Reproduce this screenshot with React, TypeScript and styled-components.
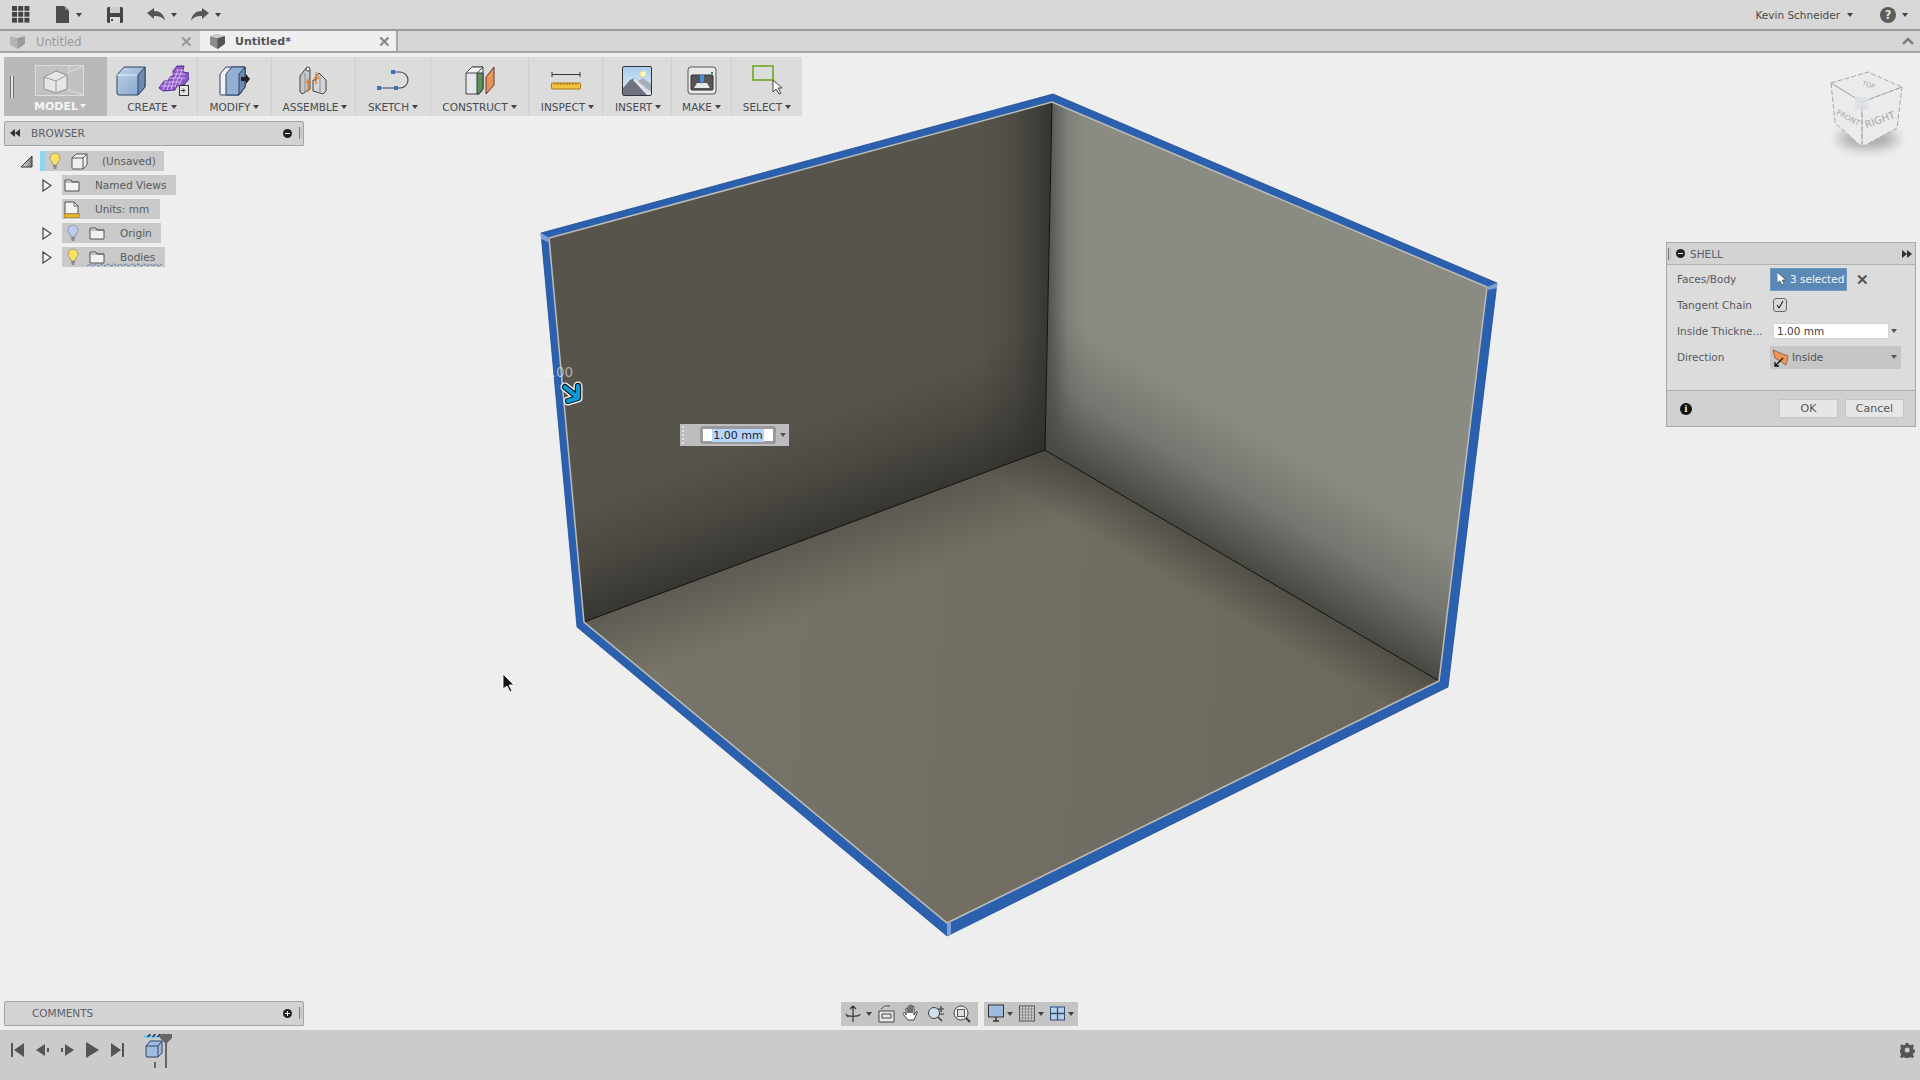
import React from "react";
import styled, { createGlobalStyle } from "styled-components";

const Global = createGlobalStyle`
  html, body { margin: 0; padding: 0; width: 1920px; height: 1080px; overflow: hidden; background: #eeeeee; }
  body { font-family: "DejaVu Sans", "Liberation Sans", sans-serif; font-size: 11px; color: #555; }
  * { box-sizing: border-box; }
`;

const Page = styled.div`
  width: 1920px; height: 1080px; display: flex; flex-direction: column; background: #eeeeee;
`;
const TopBar = styled.header`
  height: 31px; flex: none; display: flex; align-items: center; background: #d8d8d8;
  border-bottom: 2px solid #9b9b9b; padding: 0 12px 0 12px;
`;
const TopIcon = styled.span<{ $gap?: number }>`
  display: inline-flex; align-items: center; gap: 6px; margin-left: ${p => p.$gap ?? 0}px;
`;
const Caret = styled.span<{ $color?: string }>`
  display: inline-block; width: 0; height: 0; border-left: 3.5px solid transparent; border-right: 3.5px solid transparent;
  border-top: 4px solid ${p => p.$color ?? "#444"};
`;
const Spacer = styled.div`flex: 1;`;
const UserName = styled.span`
  display: inline-flex; align-items: center; gap: 7px; font-size: 10.5px; color: #4a4a4a; margin-right: 27px; padding-top: 1px;
`;
const TabBar = styled.nav`
  height: 22px; flex: none; display: flex; background: #d6d6d6; border-bottom: 2px solid #a2a2a2; position: relative;
`;
const Tab = styled.div<{ $active?: boolean }>`
  width: 198px; height: 20px; margin-right: ${p => (p.$active ? 0 : 2)}px; display: flex; align-items: center;
  padding: 1px 5px 0 9px; gap: ${p => (p.$active ? 9 : 10)}px; background: ${p => (p.$active ? "#efefef" : "#d6d6d6")};
  border-right: ${p => (p.$active ? "2px solid #a8a8a8" : "none")};
  color: ${p => (p.$active ? "#555" : "#9a9a9a")}; font-size: ${p => (p.$active ? 11 : 11.5)}px; font-weight: ${p => (p.$active ? 700 : 400)};
`;
const TabTitle = styled.span`flex: 1;`;
const TabClose = styled.span<{ $active?: boolean }>`
  font-size: 15px; font-weight: 700; color: ${p => (p.$active ? "#888" : "#999")}; line-height: 1; font-family: "Liberation Sans", sans-serif;
`;
const ChevronSlot = styled.div`
  position: absolute; right: 6px; top: 2px; height: 16px; display: flex; align-items: center;
`;
const Viewport = styled.main`
  flex: 1; position: relative; background: #eeeeee; overflow: hidden;
`;
const ModelCanvas = styled.svg`
  position: absolute; left: 0; top: 0; width: 1920px; height: 977px;
`;
const Hud = styled.div`
  position: relative; height: 100%; display: flex; flex-direction: column; padding: 4px; width: 820px;
  pointer-events: none;
`;
const Toolbar = styled.div`
  height: 59px; width: 798px; flex: none; display: flex; background: #dcdcdc;
`;
const ModelTool = styled.div`
  width: 103px; flex: none; background: #b9b9b9; position: relative; display: flex; flex-direction: column; align-items: center; padding-left: 9px;
`;
const Grip = styled.span`
  position: absolute; left: 6px; top: 19px; width: 4px; height: 22px; border-left: 1px solid #6c6c6c; border-right: 1px solid #6c6c6c; background: #e6e6e6;
`;
const ModelLabel = styled.div`
  display: flex; align-items: center; gap: 2px; font-weight: 700; color: #f6f6f6; height: 16px; margin-top: -1px; font-size: 11px; flex: none;
`;
const ToolGroup = styled.div<{ $w: number; $last?: boolean }>`
  width: ${p => p.$w}px; flex: none; display: flex; flex-direction: column; align-items: center;
  border-right: ${p => (p.$last ? "none" : "1px solid #cfcfcf")};
`;
const ToolIcons = styled.div`
  height: 37px; flex: none; margin-top: 5px; display: flex; align-items: center; gap: 12px;
`;
const ToolLabel = styled.div<{ $shift?: number }>`
  display: flex; align-items: center; gap: 3px; height: 15px; font-size: 10.5px; color: #474b52; white-space: nowrap; flex: none;
  padding-left: ${p => p.$shift ?? 0}px;
`;
const PanelHeader = styled.div<{ $mt?: number }>`
  width: 300px; height: 25px; flex: none; margin-top: ${p => p.$mt ?? 0}px; display: flex; align-items: center;
  background: #d3d3d3; border: 1px solid #a3a3a3; border-radius: 2px 2px 0 0; padding: 0 1px 1px 5px; color: #5a5f68; font-size: 10.5px;
`;
const PanelTitle = styled.span<{ $pad: number }>`
  flex: 1; padding-left: ${p => p.$pad}px;
`;
const MiniGrip = styled.span`
  width: 3px; height: 12px; border-left: 1px solid #777; border-right: 1px solid #bbb; margin-left: 7px;
`;
const DialogGrip = styled(MiniGrip)`
  margin-left: 0;
`;
const RoundBtn = styled.span`
  width: 9px; height: 9px; border-radius: 50%; background: #222; position: relative; flex: none;
`;
const RoundGlyph = styled.span<{ $plus?: boolean }>`
  position: absolute; left: 2px; top: 4px; width: 5px; height: 1px; background: #eee;
  &::after { content: ""; display: ${p => (p.$plus ? "block" : "none")}; position: absolute; left: 2px; top: -2px; width: 1px; height: 5px; background: #eee; }
`;
const Tree = styled.div`
  flex: 1; padding-top: 3px; display: flex; flex-direction: column;
`;
const TreeRow = styled.div<{ $indent: number }>`
  height: 24px; flex: none; display: flex; align-items: center; padding-left: ${p => p.$indent}px;
`;
const Expander = styled.span<{ $w: number }>`
  width: ${p => p.$w}px; flex: none; display: flex; align-items: center;
`;
const TreePill = styled.div<{ $w: number; $active?: boolean; $pad?: number }>`
  width: ${p => p.$w}px; height: 20px; display: flex; align-items: center; background: #c9c9c9; position: relative;
  border-left: ${p => (p.$active ? "5px solid #90d2f3" : "none")}; padding-left: ${p => p.$pad ?? 3}px;
`;
const TreeIcon = styled.span<{ $mr: number }>`
  display: inline-flex; margin-right: ${p => p.$mr}px; flex: none;
`;
const TreeText = styled.span`
  font-size: 10.5px; color: #555a62; white-space: nowrap;
`;
const Wavy = styled.svg`
  position: absolute; left: 25px; bottom: 0;
`;
const Dialog = styled.section`
  position: absolute; left: 1666px; top: 189px; width: 250px; height: 185px; background: #dcdcdc;
  border: 1px solid #a8a8a8; display: flex; flex-direction: column; color: #555;
`;
const DialogHead = styled.div`
  height: 22px; flex: none; display: flex; align-items: center; background: #d3d3d3; border-bottom: 1px solid #b0b0b0;
  padding: 0 3px 0 1px; gap: 5px; color: #5a5f68; font-size: 10.5px;
`;
const DialogBody = styled.div`
  flex: 1; padding-top: 1px; display: flex; flex-direction: column;
`;
const DialogRow = styled.div`
  height: 26px; display: flex; align-items: center; padding-left: 10px; font-size: 10.5px;
`;
const DialogLabel = styled.span`
  width: 93px; flex: none; color: #555a62; white-space: nowrap;
`;
const SelectedBtn = styled.span`
  width: 77px; height: 23px; display: flex; align-items: center; padding-left: 6px; gap: 4px; background: #5a89b5;
  border: 1px solid #6e9ac2; color: #f4f6f8; font-size: 10.5px; white-space: nowrap;
`;
const ClearX = styled.span`
  margin-left: 9px; font: 700 15px "Liberation Sans", sans-serif; color: #555; line-height: 1;
`;
const CheckBox = styled.span`
  width: 14px; height: 14px; margin-left: 3px; background: #d8d8d8; border: 1px solid #666; border-radius: 3px; display: flex; align-items: center; justify-content: center;
`;
const TextField = styled.span`
  width: 116px; height: 16px; margin-left: 3px; background: #fff; border: 1px solid #d4d4d4; display: flex; align-items: center; padding-left: 3px; color: #444;
`;
const CaretSlot = styled.span`
  width: 10px; display: flex; justify-content: center;
`;
const SelectBox = styled.span`
  width: 131px; height: 23px; background: #c6c6c6; display: flex; align-items: center; padding: 0 4px 0 2px; gap: 3px; color: #555;
`;
const DialogFoot = styled.div`
  height: 36px; flex: none; background: #d0d0d0; border-top: 1px solid #b0b0b0; display: flex; align-items: center; padding: 0 0 0 13px;
`;
const InfoDot = styled.span`
  width: 12px; height: 12px; flex: none; border-radius: 50%; background: #111; color: #fff; font: 700 10px "Liberation Serif", serif; display: flex; align-items: center; justify-content: center; margin-right: 87px;
`;
const DlgButton = styled.span`
  width: 59px; height: 19px; flex: none; margin-right: 7px; background: #e6e6e6; border: 1px solid #c4c4c4; display: flex; align-items: center; justify-content: center; font-size: 11px; color: #555;
`;
const DimInput = styled.div`
  position: absolute; left: 680px; top: 371px; width: 109px; height: 22px; background: #bdbdbd; display: flex; align-items: center; padding-left: 2px;
`;
const DimGrip = styled.span`
  width: 3px; height: 18px; margin-right: 15px; border-left: 2px dotted #dedede;
`;
const DimField = styled.span`
  width: 76px; height: 18px; background: #fff; border: 3px solid #9a9a9a; border-radius: 3px; display: flex; align-items: center; justify-content: center; font-size: 11px; color: #222;
`;
const DimSel = styled.span`
  background: #b4d5fe; padding: 0 1px;
`;
const DimCaret = styled.span`
  margin-left: 4px; display: flex;
`;
const DimValue = styled.span`
  position: absolute; left: 543px; top: 311px; font-size: 13.5px; color: rgba(255,255,255,.55);
`;
const Pin = styled.svg<{ $x: number; $y: number }>`
  position: absolute; left: ${p => p.$x}px; top: ${p => p.$y}px;
`;
const NavBar = styled.div`
  position: absolute; left: 841px; bottom: 4px; display: flex; gap: 6px; height: 24px;
`;
const NavGroup = styled.div<{ $w: number; $pad: number }>`
  width: ${p => p.$w}px; height: 24px; background: #c4c4c4; display: flex; align-items: center; padding-left: ${p => p.$pad}px; gap: 6px;
`;
const NavItem = styled.span`
  display: inline-flex; align-items: center; gap: 3px;
`;
const Timeline = styled.footer`
  height: 50px; flex: none; background: #cbcbcb; display: flex; align-items: center; padding: 0 5px 10px 11px;
`;
const TimeBtns = styled.div`
  display: flex; align-items: center; gap: 12px; width: 133px;
`;

const TabCube = ({ faded }: { faded?: boolean }) => (
  <svg width="17" height="17" viewBox="0 0 16 16" opacity={faded ? 0.45 : 1}>
    <path d="M1 3l7-2 7 2v7l-7 5-7-4z" fill="#8a8a8a" />
    <path d="M1 3l7-2 7 2-7 2z" fill="#cfcfcf" />
    <path d="M8 5l7-2v7l-7 5z" fill="#555" />
  </svg>
);

const BlueCube = ({ s = 30 }: { s?: number }) => (
  <svg width={s} height={s} viewBox="0 0 30 30">
    <defs><linearGradient id="bc" x1="0" y1="0" x2="1" y2="1"><stop offset="0" stopColor="#c2d6ec" /><stop offset="1" stopColor="#7f9fc8" /></linearGradient></defs>
    <path d="M1 9L8 1h21v20l-7 8H3a2 2 0 01-2-2z" fill="url(#bc)" stroke="#2f4463" strokeWidth="1" strokeLinejoin="round" />
    <path d="M1 9h21l7-8" fill="none" stroke="#e8f0f8" strokeWidth="1" />
    <path d="M22 9v20l7-8V1z" fill="#6f8bb2" stroke="#2f4463" />
  </svg>
);
const PurpleForm = () => (
  <svg width="31" height="31" viewBox="0 0 31 31">
    <path d="M1 23l5-7h4l2-4 3-1V6l4-5h7l-1 6 6 1 0 6-5 6-7 1-2 4-12 1z" fill="#8d57c6" stroke="#5a2d96" strokeLinejoin="round" />
    <path d="M3 21h13M6 17h16M10 13h17M14 9h13M18 5h8M8 17l-3 8M12 17l-3 8M16 13l-3 12M20 13l-3 9M24 5l-3 8M20 5l-3 8M24 13l-3 8" stroke="#d9c6f0" strokeWidth=".9" fill="none" />
    <rect x="21.500" y="20.500" width="9" height="10" fill="#e8e8e8" stroke="#333" />
    <path d="M23 25.500h3M25 23.500l2 2-2 2" stroke="#222" fill="none" />
  </svg>
);
const ModifyIcon = () => (
  <svg width="31" height="30" viewBox="0 0 31 30">
    <path d="M1 8l6-7h19v20l-6 8H2a1 1 0 01-1-1z" fill="#f2f2f2" stroke="#2f4463" />
    <path d="M7 8l6-7h13v20l-6 8H7z" fill="#93afd3" stroke="#2f4463" />
    <path d="M20 8v21l6-8V1z" fill="#6f8bb2" stroke="#2f4463" />
    <path d="M22 11h5V8l4 5-4 5v-3h-5z" fill="#222" />
  </svg>
);
const AssembleIcon = () => (
  <svg width="29" height="29" viewBox="0 0 29 29">
    <path d="M1 10l7-9 3 3v19l-8 5-2-2z" fill="#c4c9d0" stroke="#444" />
    <path d="M27 14l-7-7-3 4v3l-3 0v11l10 3 3-3z" fill="#d2d6db" stroke="#444" />
    <path d="M6 7v19M21 9v17" stroke="#8b8f96" />
    <circle cx="9" cy="3" r="2" fill="#fff" stroke="#444" />
    <path d="M9 13v13M17 6v12M7 16h5M15 12h5" stroke="#e6761e" strokeWidth="1.300" />
  </svg>
);
const SketchIcon = () => (
  <svg width="32" height="24" viewBox="0 0 32 24">
    <path d="M3 19h20a8 8 0 000-16h-6" fill="none" stroke="#444" strokeWidth="1.100" />
    <rect x="0" y="17" width="4" height="4" fill="#3c6fc4" /><rect x="14" y="1" width="4" height="4" fill="#3c6fc4" /><rect x="17" y="17" width="4" height="4" fill="#3c6fc4" />
  </svg>
);
const ConstructIcon = () => (
  <svg width="30" height="29" viewBox="0 0 30 29">
    <path d="M1 7l6-6h11v22l-4 5H1z" fill="#e4e6e8" stroke="#444" />
    <path d="M12 7h6v16l-4 5h-2z" fill="#5d9350" stroke="#335" />
    <path d="M1 7h11l6-6H7z" fill="#f4f4f4" stroke="#444" />
    <path d="M21 28V11l8-10v18z" fill="#e8935a" stroke="#5a3a24" />
  </svg>
);
const RulerIcon = () => (
  <svg width="30" height="18" viewBox="0 0 30 18">
    <path d="M1 0v5M29 0v5M1 2.500h28" stroke="#333" fill="none" />
    <rect x="0.500" y="11" width="29" height="6" rx="1" fill="#f2c33e" stroke="#a9781c" />
    <path d="M4 11v2M7 11v2M10 11v2M13 11v2M16 11v2M19 11v2M22 11v2M25 11v2" stroke="#9a6a12" />
  </svg>
);
const InsertIcon = () => (
  <svg width="30" height="30" viewBox="0 0 30 30">
    <defs><linearGradient id="sky" x1="0" y1="0" x2="0" y2="1"><stop offset="0" stopColor="#a6cdee" /><stop offset="1" stopColor="#e3eef7" /></linearGradient></defs>
    <rect x="0.500" y="0.500" width="29" height="29" rx="1.500" fill="url(#sky)" stroke="#333" />
    <circle cx="21" cy="8" r="3" fill="#fff6c8" stroke="#f5d98a" />
    <path d="M1 22l7-8 5-2 16 17H1z" fill="#6f7380" />
    <path d="M16 15l5-3 8 6v8z" fill="#a5adb8" />
    <path d="M13 12l16 17h-4L11 14z" fill="#e4e7ea" />
  </svg>
);
const MakeIcon = () => (
  <svg width="30" height="29" viewBox="0 0 30 29">
    <path d="M1 4a3 3 0 013-3h22a3 3 0 013 3v21a3 3 0 01-3 3H4a3 3 0 01-3-3z" fill="#e9e9e9" stroke="#555" />
    <rect x="4" y="9" width="22" height="15" rx="1" fill="#555" stroke="#333" />
    <path d="M7 22l3-5h10l3 5z" fill="#e8e8e8" />
    <path d="M13 9h4v6l-2 3-2-3z" fill="#4d8cd6" />
    <rect x="24" y="6" width="2" height="2" fill="#2b8a3e" />
  </svg>
);
const SelectIcon = () => (
  <svg width="31" height="31" viewBox="0 0 31 31">
    <rect x="1" y="1" width="20" height="14" fill="none" stroke="#6aaa1e" strokeWidth="1.600" />
    <path d="M21 15v12l3-3 3 5 2-1-3-5h4z" fill="#fff" stroke="#444" strokeWidth="1" />
  </svg>
);
const ModelIcon = () => (
  <svg width="50" height="31" viewBox="0 0 50 31">
    <rect x="0.500" y="0.500" width="48" height="30" fill="#c2c2c2" stroke="#dcdcdc" />
    <path d="M32 8L48 1M32 24l16 6M34 1v7" stroke="#dedede" fill="none" />
    <path d="M9 12l12-6 11 4v14l-11 4-12-4z" fill="#e6e6e6" stroke="#8f8f8f" />
    <path d="M9 12l12 4 11-6M21 16v12" stroke="#9a9a9a" fill="none" />
  </svg>
);

const Bulb = ({ color }: { color: string }) => (
  <svg width="12" height="18" viewBox="0 0 12 18">
    <path d="M6 1a5 5 0 00-3 9l1 3h4l1-3a5 5 0 00-3-9z" fill={color} stroke="#8f8f8f" strokeWidth=".8" />
    <path d="M4 14h4M4.500 16h3" stroke="#777" strokeWidth="1.400" />
  </svg>
);
const Folder = () => (
  <svg width="16" height="13" viewBox="0 0 16 13">
    <path d="M1 12V1h6l1 2h7v9z" fill="#f2f2f2" stroke="#444" strokeWidth=".9" />
    <path d="M1 3h14" stroke="#444" strokeWidth=".6" />
  </svg>
);
const TreeTriangle = ({ open }: { open?: boolean }) =>
  open ? (
    <svg width="13" height="13" viewBox="0 0 13 13"><defs><linearGradient id="tt" x1="0" y1="0" x2="1" y2="0"><stop offset="0" stopColor="#eee" /><stop offset="1" stopColor="#777" /></linearGradient></defs><path d="M1 12L12 1v11z" fill="url(#tt)" stroke="#333" /></svg>
  ) : (
    <svg width="10" height="13" viewBox="0 0 10 13"><path d="M1 1l8 5.500L1 12z" fill="#f4f4f4" stroke="#444" strokeWidth="1.200" /></svg>
  );
const SmallCube = () => (
  <svg width="17" height="17" viewBox="0 0 17 17">
    <path d="M1 5l4-4h11v11l-4 4H2a1 1 0 01-1-1z" fill="#efefef" stroke="#555" strokeLinejoin="round" />
    <path d="M1 5h11l4-4M12 5v11" fill="none" stroke="#555" />
  </svg>
);
const UnitsDoc = () => (
  <svg width="16" height="17" viewBox="0 0 16 17">
    <path d="M1 13V1h9l4 4v8z" fill="#f3f3f3" stroke="#444" strokeWidth=".9" />
    <path d="M10 1v4h4" fill="none" stroke="#444" strokeWidth=".8" />
    <rect x="0.500" y="13" width="15" height="3.500" fill="#f0b92c" stroke="#a87a12" strokeWidth=".7" />
  </svg>
);

const ViewCube = () => (
  <Pin $x={1820} $y={12} width="96" height="106" viewBox="0 0 96 106">
    <defs><filter id="soft" x="-40%" y="-80%" width="180%" height="260%"><feGaussianBlur stdDeviation="6" /></filter></defs>
    <ellipse cx="48" cy="74" rx="30" ry="10" fill="#000" opacity=".28" filter="url(#soft)" />
    <path d="M11 18L48 7l34 15-5 41-35 19-27-24z" fill="#ebebeb" />
    <path d="M11 18L48 7l34 15-40 15zM11 18l4 40 27 24V37zM42 37l40-15-5 41-35 19z" fill="none" stroke="#a8a8a8" strokeDasharray="5 2" />
    <rect x="35" y="32" width="13" height="13" fill="#dde2e8" opacity=".85" />
    <text x="48" y="22" fontSize="6.500" fill="#aaa" fontFamily="DejaVu Sans" textAnchor="middle" transform="rotate(18 48 22)">TOP</text>
    <text x="27" y="55" fontSize="7.500" fill="#aaa" fontFamily="DejaVu Sans" textAnchor="middle" transform="rotate(28 27 55)">FRONT</text>
    <text x="61" y="58" fontSize="10" fill="#a4a4aa" fontFamily="DejaVu Sans" textAnchor="middle" transform="rotate(-20 61 58)">RIGHT</text>
  </Pin>
);

const Model = () => (
  <ModelCanvas viewBox="0 53 1920 977">
    <defs>
      <linearGradient id="wallL" gradientUnits="userSpaceOnUse" x1="815" y1="536" x2="775" y2="430"><stop offset="0" stopColor="#35342f" stopOpacity=".95" /><stop offset=".5" stopColor="#35342f" stopOpacity=".35" /><stop offset="1" stopColor="#35342f" stopOpacity="0" /></linearGradient>
      <linearGradient id="wallLE" gradientUnits="userSpaceOnUse" x1="1050" y1="270" x2="980" y2="270"><stop offset="0" stopColor="#2f2e2b" stopOpacity=".8" /><stop offset=".5" stopColor="#2f2e2b" stopOpacity=".25" /><stop offset="1" stopColor="#2f2e2b" stopOpacity="0" /></linearGradient>
      <linearGradient id="wallR" gradientUnits="userSpaceOnUse" x1="1242" y1="565" x2="1305" y2="457"><stop offset="0" stopColor="#44453f" stopOpacity=".95" /><stop offset=".5" stopColor="#44453f" stopOpacity=".3" /><stop offset="1" stopColor="#44453f" stopOpacity="0" /></linearGradient>
      <linearGradient id="wallRE" gradientUnits="userSpaceOnUse" x1="1050" y1="270" x2="1085" y2="270"><stop offset="0" stopColor="#4a4b46" stopOpacity=".8" /><stop offset=".5" stopColor="#4a4b46" stopOpacity=".18" /><stop offset="1" stopColor="#4a4b46" stopOpacity="0" /></linearGradient>
      <linearGradient id="floorB" gradientUnits="userSpaceOnUse" x1="584" y1="622" x2="1439" y2="681"><stop offset="0" stopColor="#79756a" /><stop offset="1" stopColor="#6b675c" /></linearGradient>
      <linearGradient id="floorL" gradientUnits="userSpaceOnUse" x1="815" y1="536" x2="840" y2="603"><stop offset="0" stopColor="#45433c" stopOpacity=".5" /><stop offset="1" stopColor="#45433c" stopOpacity="0" /></linearGradient>
      <linearGradient id="floorR" gradientUnits="userSpaceOnUse" x1="1242" y1="565" x2="1217" y2="608"><stop offset="0" stopColor="#45433c" stopOpacity=".7" /><stop offset="1" stopColor="#45433c" stopOpacity="0" /></linearGradient>
    </defs>
    <path d="M541 233L1053 94 1497 283 1448 687 947 936 577 627z" fill="#2b60ae" stroke="#1d4c94" strokeWidth=".8" />
    <path d="M549 238L1052 102 1487 287 1439 681 947 923 584 622z" fill="#55524a" />
    <path d="M549 238L1052 102 1045 450 584 622z" fill="#57544c" />
    <path d="M549 238L1052 102 1045 450 584 622z" fill="url(#wallL)" />
    <path d="M549 238L1052 102 1045 450 584 622z" fill="url(#wallLE)" />
    <path d="M1052 102L1487 287 1439 681 1045 450z" fill="#8a8b83" />
    <path d="M1052 102L1487 287 1439 681 1045 450z" fill="url(#wallR)" />
    <path d="M1052 102L1487 287 1439 681 1045 450z" fill="url(#wallRE)" />
    <path d="M584 622L1045 450 1439 681 947 923z" fill="url(#floorB)" />
    <path d="M584 622L1045 450 1439 681 947 923z" fill="url(#floorL)" />
    <path d="M584 622L1045 450 1439 681 947 923z" fill="url(#floorR)" />
    <path d="M584 622L1045 450 1439 681M1052 102L1045 450" fill="none" stroke="#111" strokeWidth="1" />
    <path d="M549 238L1052 102 1487 287 1439 681 947 923 584 622z" fill="none" stroke="#bdbcb6" strokeWidth="1.500" />
    <path d="M541 233l8 5-1 4-7-3zM1497 283l-10 4 1 3 9-2zM947 923v13l4-2v-11z" fill="#7ea0d4" />
  </ModelCanvas>
);

const NavIcon = ({ children, w = 24 }: { children: React.ReactNode; w?: number }) => (
  <svg width={w} height="20" viewBox={`0 0 ${w} 20`}>{children}</svg>
);

export default function App() {
  return (
    <Page>
      <Global />
      <TopBar>
        <svg width="18" height="17" viewBox="0 0 18 17" fill="#444">
          {[0, 1, 2].flatMap(c => [0, 1, 2].map(r => <rect key={`${c}${r}`} x={c * 6.2} y={r * 5.9} width="5" height="4.800" />))}
        </svg>
        <TopIcon $gap={26}>
          <svg width="14" height="17" viewBox="0 0 14 17"><path d="M0 0h8l5 5v12H0z" fill="#4c4c4c" /><path d="M9 0l4 4H9z" fill="#8a8a8a" /></svg>
          <Caret />
        </TopIcon>
        <TopIcon $gap={25}>
          <svg width="16" height="16" viewBox="0 0 16 16"><path d="M0 1.500A1.500 1.500 0 011.500 0h13A1.500 1.500 0 0116 1.500v13a1.500 1.500 0 01-1.500 1.500h-13A1.500 1.500 0 010 14.500z" fill="#444" /><rect x="3" y="0" width="10" height="6" fill="#ccc" /><rect x="3" y="10" width="10" height="6" fill="#ddd" /><rect x="4" y="12" width="2" height="2" fill="#444" /></svg>
        </TopIcon>
        <TopIcon $gap={24}>
          <svg width="18" height="13" viewBox="0 0 18 13"><path d="M0 5l7-5v3c6 0 10 3 11 10-2-4-6-5-11-5v3z" fill="#555" /></svg>
          <Caret />
        </TopIcon>
        <TopIcon $gap={14}>
          <svg width="18" height="13" viewBox="0 0 18 13"><path d="M18 5l-7-5v3C5 3 1 6 0 13c2-4 6-5 11-5v3z" fill="#555" /></svg>
          <Caret />
        </TopIcon>
        <Spacer />
        <UserName>Kevin Schneider<Caret /></UserName>
        <TopIcon>
          <svg width="16" height="16" viewBox="0 0 16 16"><circle cx="8" cy="8" r="8" fill="#5c5c5c" /><text x="8" y="12" fontSize="11.500" fontWeight="700" fill="#e4e4e4" textAnchor="middle" fontFamily="DejaVu Sans">?</text></svg>
          <Caret />
        </TopIcon>
      </TopBar>
      <TabBar>
        <Tab><TabCube faded /><TabTitle>Untitled</TabTitle><TabClose>✕</TabClose></Tab>
        <Tab $active><TabCube /><TabTitle>Untitled*</TabTitle><TabClose $active>✕</TabClose></Tab>
        <ChevronSlot><svg width="12" height="8" viewBox="0 0 12 8"><path d="M1 7l5-5 5 5" fill="none" stroke="#777" strokeWidth="2.400" /></svg></ChevronSlot>
      </TabBar>
      <Viewport>
        <Model />
        <Hud>
          <Toolbar>
            <ModelTool>
              <Grip />
              <ToolIcons><ModelIcon /></ToolIcons>
              <ModelLabel>MODEL<Caret $color="#f4f4f4" /></ModelLabel>
            </ModelTool>
            <ToolGroup $w={91}><ToolIcons><BlueCube /><PurpleForm /></ToolIcons><ToolLabel>CREATE<Caret /></ToolLabel></ToolGroup>
            <ToolGroup $w={74}><ToolIcons><ModifyIcon /></ToolIcons><ToolLabel>MODIFY<Caret /></ToolLabel></ToolGroup>
            <ToolGroup $w={84}><ToolIcons><AssembleIcon /></ToolIcons><ToolLabel $shift={3}>ASSEMBLE<Caret /></ToolLabel></ToolGroup>
            <ToolGroup $w={75}><ToolIcons><SketchIcon /></ToolIcons><ToolLabel>SKETCH<Caret /></ToolLabel></ToolGroup>
            <ToolGroup $w={98}><ToolIcons><ConstructIcon /></ToolIcons><ToolLabel>CONSTRUCT<Caret /></ToolLabel></ToolGroup>
            <ToolGroup $w={74}><ToolIcons><RulerIcon /></ToolIcons><ToolLabel $shift={4}>INSPECT<Caret /></ToolLabel></ToolGroup>
            <ToolGroup $w={69}><ToolIcons><InsertIcon /></ToolIcons><ToolLabel $shift={2}>INSERT<Caret /></ToolLabel></ToolGroup>
            <ToolGroup $w={60}><ToolIcons><MakeIcon /></ToolIcons><ToolLabel>MAKE<Caret /></ToolLabel></ToolGroup>
            <ToolGroup $w={70} $last><ToolIcons><SelectIcon /></ToolIcons><ToolLabel>SELECT<Caret /></ToolLabel></ToolGroup>
          </Toolbar>
          <PanelHeader $mt={5}>
            <svg width="10" height="8" viewBox="0 0 10 8"><path d="M5 0v8L0 4zM10 0v8L5 4z" fill="#333" /></svg>
            <PanelTitle $pad={11}>BROWSER</PanelTitle>
            <RoundBtn><RoundGlyph /></RoundBtn><MiniGrip />
          </PanelHeader>
          <Tree>
            <TreeRow $indent={16}>
              <Expander $w={20}><TreeTriangle open /></Expander>
              <TreePill $w={124} $active $pad={4}>
                <TreeIcon $mr={10}><Bulb color="#f6e25c" /></TreeIcon>
                <TreeIcon $mr={14}><SmallCube /></TreeIcon>
                <TreeText>(Unsaved)</TreeText>
              </TreePill>
            </TreeRow>
            <TreeRow $indent={38}>
              <Expander $w={20}><TreeTriangle /></Expander>
              <TreePill $w={114} $pad={2}><TreeIcon $mr={15}><Folder /></TreeIcon><TreeText>Named Views</TreeText></TreePill>
            </TreeRow>
            <TreeRow $indent={38}>
              <Expander $w={20} />
              <TreePill $w={98} $pad={2}><TreeIcon $mr={15}><UnitsDoc /></TreeIcon><TreeText>Units: mm</TreeText></TreePill>
            </TreeRow>
            <TreeRow $indent={38}>
              <Expander $w={20}><TreeTriangle /></Expander>
              <TreePill $w={99} $pad={5}>
                <TreeIcon $mr={10}><Bulb color="#b9cff2" /></TreeIcon>
                <TreeIcon $mr={15}><Folder /></TreeIcon><TreeText>Origin</TreeText>
              </TreePill>
            </TreeRow>
            <TreeRow $indent={38}>
              <Expander $w={20}><TreeTriangle /></Expander>
              <TreePill $w={103} $pad={5}>
                <TreeIcon $mr={10}><Bulb color="#f6e25c" /></TreeIcon>
                <TreeIcon $mr={15}><Folder /></TreeIcon><TreeText>Bodies</TreeText>
                <Wavy width="76" height="4" viewBox="0 0 76 4"><path d="M0 3L3 1 6 3 9 1 12 3 15 1 18 3 21 1 24 3 27 1 30 3 33 1 36 3 39 1 42 3 45 1 48 3 51 1 54 3 57 1 60 3 63 1 66 3 69 1 72 3 75 1" fill="none" stroke="#6c84aa" strokeWidth="1.100" strokeDasharray="3 1" /></Wavy>
              </TreePill>
            </TreeRow>
          </Tree>
          <PanelHeader>
            <PanelTitle $pad={22}>COMMENTS</PanelTitle>
            <RoundBtn><RoundGlyph $plus /></RoundBtn><MiniGrip />
          </PanelHeader>
        </Hud>
        <ViewCube />
        <Dialog>
          <DialogHead>
            <DialogGrip />
            <RoundBtn><RoundGlyph /></RoundBtn>
            <Spacer as="span">SHELL</Spacer>
            <svg width="10" height="8" viewBox="0 0 10 8"><path d="M0 0v8l5-4zM5 0v8l5-4z" fill="#333" /></svg>
          </DialogHead>
          <DialogBody>
            <DialogRow><DialogLabel>Faces/Body</DialogLabel>
              <SelectedBtn>
                <svg width="9" height="14" viewBox="0 0 9 14"><path d="M0 0v11l3-2 2 4 2-1-2-4h4z" fill="#fff" stroke="#333" strokeWidth=".6" /></svg>
                3 selected
              </SelectedBtn>
              <ClearX>✕</ClearX>
            </DialogRow>
            <DialogRow><DialogLabel>Tangent Chain</DialogLabel>
              <CheckBox><svg width="10" height="10" viewBox="0 0 10 10"><path d="M2 5l2 3 4-7" fill="none" stroke="#222" strokeWidth="1.100" /></svg></CheckBox>
            </DialogRow>
            <DialogRow><DialogLabel>Inside Thickne...</DialogLabel>
              <TextField>1.00 mm</TextField>
              <CaretSlot><Caret $color="#555" /></CaretSlot>
            </DialogRow>
            <DialogRow><DialogLabel>Direction</DialogLabel>
              <SelectBox>
                <svg width="17" height="19" viewBox="0 0 17 19"><path d="M1 2l7 3 8 3-2 9-6-4-5-3z" fill="#f0945a" stroke="#7a4a24" strokeWidth=".7" /><path d="M11 10L3 18M3 14v4h4" fill="none" stroke="#111" strokeWidth="1.300" /></svg>
                <Spacer as="span">Inside</Spacer>
                <Caret $color="#555" />
              </SelectBox>
            </DialogRow>
          </DialogBody>
          <DialogFoot>
            <InfoDot>i</InfoDot>
            <DlgButton>OK</DlgButton>
            <DlgButton>Cancel</DlgButton>
          </DialogFoot>
        </Dialog>
        <DimValue>1.00</DimValue>
        <Pin $x={556} $y={324} width="30" height="30" viewBox="0 0 30 30">
          <g fill="none" strokeLinecap="round" strokeLinejoin="round" transform="translate(2 2)">
            <path d="M7 8L18 17M20 7V19L10 22" stroke="#fff" strokeWidth="9" />
            <path d="M7 8L18 17M20 7V19L10 22" stroke="#10222c" strokeWidth="6.500" />
            <path d="M7 8L18 17M20 7V19L10 22" stroke="#0c9ad6" strokeWidth="4" />
          </g>
        </Pin>
        <DimInput>
          <DimGrip />
          <DimField><DimSel>1.00 mm</DimSel></DimField>
          <DimCaret><Caret $color="#555" /></DimCaret>
        </DimInput>
        <Pin $x={502} $y={620} width="14" height="20" viewBox="0 0 14 20">
          <path d="M1 1v15l4-3 3 6 2-1-3-6h5z" fill="#111" stroke="#fff" strokeWidth=".9" />
        </Pin>
        <NavBar>
          <NavGroup $w={137} $pad={2}>
            <NavItem>
              <NavIcon w={20}><path d="M10 2v16M10 2L7 5M10 2l3 3M3 10c0 3 14 3 14 0M3 10l2 3" fill="none" stroke="#333" strokeWidth="1.200" /></NavIcon>
              <Caret />
            </NavItem>
            <NavIcon w={17}><path d="M1 7h15v11H1zM3 5l4-3h5M4 10h9v4H4z" fill="#e8e8e8" stroke="#444" /></NavIcon>
            <NavIcon w={20}><path d="M5 11V5a1 1 0 012 0v4-6a1 1 0 012 0v6-7a1 1 0 012 0v7-6a1 1 0 012 0v8l2-3c1-1 2 0 1 1l-3 7H7l-5-6c-1-1 1-2 2-1z" fill="#fff" stroke="#333" strokeWidth=".9" /></NavIcon>
            <NavIcon w={19}><circle cx="7" cy="9" r="5.500" fill="#cfe0ee" stroke="#444" /><path d="M11 13l4 4M14 2v6M11 5h6M12 10h5" stroke="#333" strokeWidth="1.200" fill="none" /></NavIcon>
            <NavIcon w={20}><circle cx="9" cy="9" r="7" fill="#eee" stroke="#444" /><rect x="5.500" y="5.500" width="7" height="7" fill="#ddd" stroke="#555" /><path d="M14 14l4 4" stroke="#333" strokeWidth="1.800" /></NavIcon>
          </NavGroup>
          <NavGroup $w={94} $pad={4}>
            <NavItem>
              <NavIcon w={16}><rect x="0.500" y="1" width="15" height="12" fill="#9ebce0" stroke="#333" /><path d="M5 17h6M8 13v4" stroke="#333" strokeWidth="1.400" /></NavIcon>
              <Caret />
            </NavItem>
            <NavItem>
              <NavIcon w={16}><rect x="0.500" y="2" width="15" height="15" fill="#d0d0d0" stroke="#555" /><path d="M3.500 2v15M6.500 2v15M9.500 2v15M12.500 2v15M0 5h16M0 8h16M0 11h16M0 14h16" stroke="#777" strokeWidth=".7" /></NavIcon>
              <Caret />
            </NavItem>
            <NavItem>
              <NavIcon w={15}><rect x="0.500" y="3" width="14" height="13" fill="#b8cfe8" stroke="#2f4d7a" /><path d="M7.500 3v13M0.500 9.500h14" stroke="#2f4d7a" strokeWidth="1.300" /></NavIcon>
              <Caret />
            </NavItem>
          </NavGroup>
        </NavBar>
      </Viewport>
      <Timeline>
        <TimeBtns>
          <svg width="13" height="14" viewBox="0 0 13 14"><path d="M0 0h2v14H0zM13 0v14L3 7z" fill="#555" /></svg>
          <svg width="13" height="14" viewBox="0 0 13 14"><path d="M9 1v12L0 7zM11 5h2v4h-2z" fill="#555" /></svg>
          <svg width="13" height="14" viewBox="0 0 13 14"><path d="M4 1v12l9-6zM0 5h2v4H0z" fill="#555" /></svg>
          <svg width="13" height="16" viewBox="0 0 13 16"><path d="M0 0v16l13-8z" fill="#555" /></svg>
          <svg width="13" height="14" viewBox="0 0 13 14"><path d="M0 0v14l10-7zM11 0h2v14h-2z" fill="#555" /></svg>
        </TimeBtns>
        <svg width="30" height="36" viewBox="0 0 30 36">
          <rect x="0" y="3" width="18" height="3" fill="#7cc4ea" />
          <path d="M3 5l2-3h2l-2 3zM8 5l2-3h2l-2 3zM13 5l2-3h2l-2 3z" fill="#333" />
          <path d="M2 14l4-5h12v12l-4 4H3a1 1 0 01-1-1z" fill="#9ebbe0" stroke="#2f4463" strokeLinejoin="round" />
          <path d="M2 14h12l4-5M14 14v11" fill="none" stroke="#2f4463" />
          <path d="M16 2h12v4l-5 5v25h-2V11l-5-5z" fill="#666" />
          <rect x="10" y="30" width="2" height="6" fill="#666" />
        </svg>
        <Spacer />
        <svg width="15" height="15" viewBox="0 0 24 24"><path d="M10 0h4l1 4 3 1 3-2 3 3-2 3 1 3 4 1v4l-4 1-1 3 2 3-3 3-3-2-3 1-1 4h-4l-1-4-3-1-3 2-3-3 2-3-1-3-4-1v-4l4-1 1-3-2-3 3-3 3 2 3-1z" fill="#555" transform="translate(0 -1) scale(.94)" /><circle cx="11.500" cy="11" r="4" fill="#cbcbcb" /></svg>
      </Timeline>
    </Page>
  );
}
